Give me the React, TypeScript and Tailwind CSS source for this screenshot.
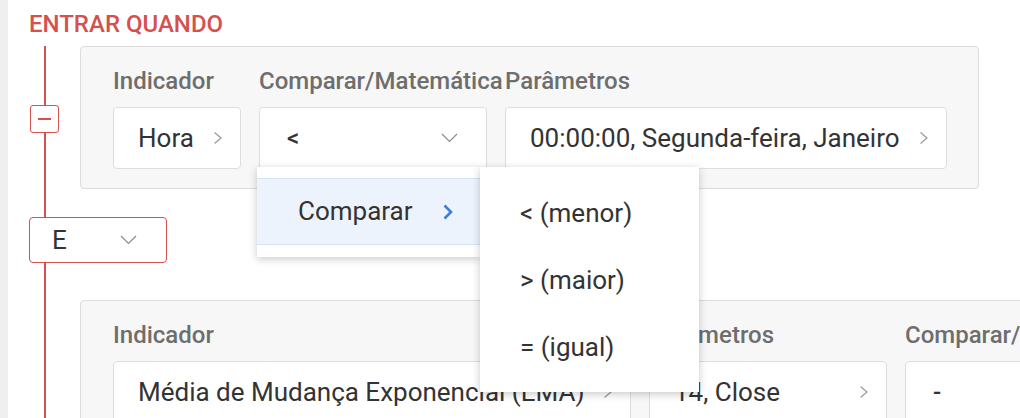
import React from "react";

type Col = { label: string; value: string; width: string; kind: "next" | "select" };

function ChevronRight({ className = "" }: { className?: string }) {
  return (
    <svg width="10" height="14" viewBox="0 0 10 14" fill="none" className={className}>
      <path d="M1.5 1.5L8 7L1.5 12.5" stroke="currentColor" strokeWidth="1.2" />
    </svg>
  );
}

function ChevronDown() {
  return (
    <svg width="17" height="10" viewBox="0 0 17 10" fill="none" className="text-[#8c8c8c]">
      <path d="M1 1L8.5 8.5L16 1" stroke="currentColor" strokeWidth="1.2" />
    </svg>
  );
}

function Field({ col, children }: { col: Col; children?: React.ReactNode }) {
  return (
    <div className={`relative shrink-0 ${col.width}`}>
      <div className="whitespace-nowrap text-[24px] font-medium leading-[28px] text-[#6e6e6e]">{col.label}</div>
      <div
        className={`mt-3 flex h-[62px] items-center justify-between rounded-[4px] border border-[#dedede] bg-white pl-6 text-[26px] text-[#333] ${
          col.kind === "select" ? "pr-[28px]" : "pr-[17px]"
        }`}
      >
        <span className={`whitespace-nowrap ${col.kind === "select" ? "pl-[3px] text-[24px] font-medium" : ""}`}>
          {col.value}
        </span>
        {col.kind === "select" ? <ChevronDown /> : <ChevronRight className="text-[#999]" />}
      </div>
      {children}
    </div>
  );
}

function Panel({ cols, menu }: { cols: Col[]; menu?: boolean }) {
  return (
    <div className="flex shrink-0 gap-[18px] rounded-[4px] border border-[#dcdcdc] bg-[#f7f7f7] pt-5 pb-[19px] pl-8 pr-[31px]">
      {cols.map((c, i) => (
        <Field key={c.label} col={c}>
          {menu && i === 1 && <CompareMenu />}
        </Field>
      ))}
    </div>
  );
}

function CompareMenu() {
  return (
    <div className="absolute left-[-2px] top-[100px] z-10 flex items-start text-[26px] text-[#333]">
      <div className="w-[223px] bg-white pt-[11px] pb-3 shadow-[0_2px_8px_rgba(0,0,0,0.22)]">
        <div className="flex h-[67px] items-center justify-between border-y border-[#d6e3f7] bg-[#edf3fd] pl-[41px] pr-[26px]">
          <span>Comparar</span>
          <svg width="12" height="16" viewBox="0 0 12 16" fill="none">
            <path d="M2.5 1.5L9 8L2.5 14.5" stroke="#3b7ddd" strokeWidth="2.6" />
          </svg>
        </div>
      </div>
      <div className="w-[219px] bg-white pt-[13px] pb-[11px] shadow-[0_2px_8px_rgba(0,0,0,0.22)]">
        {["< (menor)", "> (maior)", "= (igual)"].map((t) => (
          <div key={t} className="flex h-[67px] items-center pl-[40px]">
            {t}
          </div>
        ))}
      </div>
    </div>
  );
}

const RED = "bg-[#d6504e]";

export default function App() {
  const first: Col[] = [
    { label: "Indicador", value: "Hora", width: "w-[128px]", kind: "next" },
    { label: "Comparar/Matemática", value: "<", width: "w-[228px]", kind: "select" },
    { label: "Parâmetros", value: "00:00:00, Segunda-feira, Janeiro", width: "w-[442px]", kind: "next" },
  ];
  const second: Col[] = [
    { label: "Indicador", value: "Média de Mudança Exponencial (EMA)", width: "w-[518px]", kind: "next" },
    { label: "Parâmetros", value: "14, Close", width: "w-[238px]", kind: "next" },
    { label: "Comparar/Matemática", value: "-", width: "w-[228px]", kind: "select" },
  ];

  return (
    <div className="flex h-[418px] w-[1020px] overflow-hidden bg-white font-['Roboto',sans-serif]">
      <div className="w-2 shrink-0 bg-[#efefef]" />
      <div className="min-w-0 flex-1 pl-[21px] pt-[10px]">
        <h2 className="text-[24px] font-medium leading-[28px] text-[#d6504e]">ENTRAR QUANDO</h2>

        <div className="mt-2">
          {/* first condition */}
          <div className="flex">
            <div className="flex w-[51px] shrink-0 flex-col">
              <div className={`ml-[15px] h-[59px] w-[2px] ${RED}`} />
              <button className="ml-px flex h-[28px] w-[29px] items-center justify-center rounded-[3px] border-[1.5px] border-[#d6504e] bg-white">
                <span className={`h-[1.5px] w-[13px] ${RED}`} />
              </button>
              <div className={`ml-[15px] w-[2px] flex-1 ${RED}`} />
            </div>
            <Panel cols={first} menu />
          </div>

          <div className={`ml-[15px] h-[28px] w-[2px] ${RED}`} />

          {/* and / or */}
          <div className="flex h-[46px] w-[138px] items-center justify-between rounded-[4px] border-[1.5px] border-[#d6504e] bg-white pl-[22px] pr-[29px] text-[26px] text-[#333]">
            <span>E</span>
            <ChevronDown />
          </div>

          <div className={`ml-[15px] h-[37px] w-[2px] ${RED}`} />

          {/* second condition */}
          <div className="flex">
            <div className="flex w-[51px] shrink-0 flex-col">
              <div className={`ml-[15px] w-[2px] flex-1 ${RED}`} />
            </div>
            <Panel cols={second} />
          </div>
        </div>
      </div>
    </div>
  );
}
